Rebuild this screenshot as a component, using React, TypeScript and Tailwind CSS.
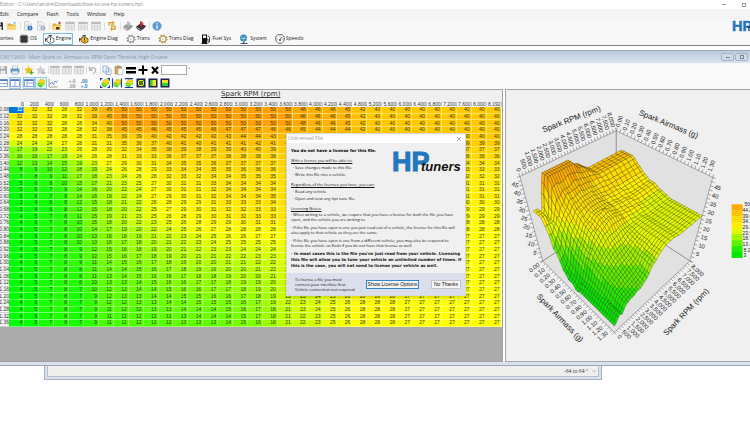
import type { ReactNode } from 'react';

const rpms = [
  0, 200, 400, 600, 800, 1000, 1200, 1400, 1600, 1800, 2000, 2200, 2400, 2600, 2800, 3000, 3200, 3400, 3600,
  3800, 4000, 4200, 4400, 4800, 5200, 5600, 6000, 6400, 6800, 7200, 7600, 8000, 8192,
];

const sparkTable = `
32 32 32 28 32 39 45 50 50 50 50 50 50 50 50 50 50 50 50 48 46 46 45 42 40 40 40 40 40 40 40 40 40
32 32 32 28 32 39 45 50 50 50 50 50 50 50 50 50 50 50 50 48 46 46 45 42 40 40 40 40 40 40 40 40 40
32 32 32 28 28 34 40 50 50 50 50 50 50 50 50 50 50 50 50 48 46 46 45 42 40 40 40 40 40 40 40 40 40
32 32 32 28 28 32 38 45 45 46 45 45 45 46 47 47 47 46 46 45 44 44 44 42 40 40 40 40 40 40 40 40 40
28 28 28 28 28 31 35 39 39 40 42 42 42 42 43 44 44 43 43 43 42 42 42 41 40 40 40 40 40 40 40 40 40
24 24 24 27 28 31 31 35 36 37 40 41 40 41 41 41 42 41 41 41 41 40 40 40 39 39 39 39 39 39 39 39 39
17 19 22 23 26 28 30 32 34 35 38 39 38 39 39 40 40 39 39 39 39 38 38 38 38 37 37 37 37 37 37 37 37
16 16 17 19 24 26 28 31 33 33 36 37 37 37 38 38 38 38 38 38 37 37 37 37 36 36 36 36 36 36 36 36 36
12 13 14 15 19 23 27 29 30 31 34 35 35 36 37 37 37 37 37 37 36 36 36 35 35 35 34 34 34 34 34 34 34
8 9 10 12 18 19 24 26 28 29 33 34 34 35 35 36 36 36 36 36 35 35 35 34 34 34 33 33 33 33 33 33 33
7 8 9 11 17 18 23 24 26 28 32 33 32 34 34 35 35 35 35 35 35 34 34 34 33 33 33 32 32 32 32 32 32
5 6 8 10 15 17 21 23 25 27 30 31 31 33 34 34 34 34 34 34 34 34 33 33 32 32 32 31 31 31 31 31 31
5 6 7 9 14 16 20 22 24 27 30 31 31 32 34 34 34 34 34 34 34 34 33 33 32 32 31 31 31 31 31 31 31
5 6 7 9 14 16 19 22 24 27 29 30 31 32 34 34 34 35 35 34 34 34 33 33 32 32 31 31 31 31 31 31 31
3 4 6 8 12 15 18 21 22 26 28 29 29 31 33 33 33 34 34 34 33 33 32 32 31 31 31 30 30 30 30 30 30
3 4 6 8 12 15 18 20 22 25 27 29 30 31 32 32 33 33 33 33 33 32 32 31 31 30 30 29 29 29 29 29 29
4 5 7 8 11 15 19 21 23 25 26 28 29 30 31 32 33 33 33 33 32 32 31 31 30 30 30 29 29 29 29 29 29
4 5 7 8 10 15 18 20 22 23 25 26 28 29 29 30 31 31 31 31 31 31 30 30 29 29 29 28 28 28 28 28 28
4 5 7 8 10 14 17 19 20 22 24 25 26 27 28 28 28 28 29 29 29 29 29 29 28 28 28 28 28 28 28 28 28
4 5 7 8 10 13 16 18 19 21 22 23 24 25 26 26 27 27 28 28 28 28 28 28 28 28 27 27 27 27 27 27 27
4 5 7 8 10 13 16 17 18 20 21 22 23 24 25 25 25 25 26 27 27 28 28 28 28 28 27 27 27 27 27 27 27
4 5 7 8 9 12 15 16 18 19 20 21 22 23 23 24 24 24 25 26 27 27 28 28 28 28 27 27 27 27 27 27 27
4 5 7 8 9 12 15 16 17 18 19 20 21 21 22 22 23 23 24 25 26 27 27 28 28 28 27 27 27 27 27 27 27
4 5 7 8 9 11 14 15 16 17 18 19 20 20 21 21 22 22 24 25 26 26 27 28 28 28 27 27 27 27 27 27 27
4 5 7 8 8 11 14 14 15 16 17 18 19 19 20 20 21 22 23 24 25 26 27 28 28 28 27 27 27 27 27 27 27
4 5 7 8 8 11 13 14 15 16 16 17 18 18 19 20 20 21 23 24 25 26 27 28 28 28 27 27 27 27 27 27 27
4 5 7 8 8 10 13 13 14 15 16 16 17 17 18 19 19 20 22 24 25 26 27 28 28 28 27 27 27 27 27 27 27
4 5 7 8 7 10 12 13 14 14 15 16 16 17 17 18 19 20 22 23 24 26 27 28 28 28 27 27 27 27 27 27 27
4 5 7 8 7 9 12 13 13 14 14 15 15 16 16 17 18 19 22 23 24 25 26 28 28 28 27 27 27 27 27 27 27
4 5 7 8 7 9 12 12 13 13 14 14 15 15 15 16 17 19 22 23 24 25 26 28 28 28 27 27 27 27 27 27 27
4 5 7 8 7 9 11 12 12 13 13 14 14 14 15 16 17 18 21 23 24 25 26 28 28 28 27 27 27 27 27 27 27
4 5 7 8 7 9 11 11 12 12 13 13 14 14 14 15 17 18 21 22 23 25 26 28 28 28 27 27 27 27 27 27 27
4 5 7 8 7 9 11 11 12 12 12 13 13 13 14 15 16 18 21 22 23 25 26 28 28 28 27 27 27 27 27 27 27`
  .trim()
  .split('\n')
  .map((line) => line.split(' ').map(Number));

const airmass = sparkTable.map((_, i) => 0.08 + i * 0.04);

const heat = (v: number) => {
  if (v <= 27) return `rgb(${Math.round(Math.max(0, (v - 5) / 22) * 255)},255,0)`;
  return `rgb(255,${Math.round(255 - ((v - 27) / 23) * 95)},0)`;
};

/* ---------- small icons ---------- */

const Svg = ({ children }: { children: ReactNode }) => (
  <svg viewBox="0 0 20 20" className="size-[10px] shrink-0" aria-hidden="true">
    {children}
  </svg>
);

const SaveIcon = ({ color = '#333' }) => (
  <Svg>
    <path d="M2 2h14l2 2v14H2z" fill={color} />
    <path d="M5 2h9v6H5zM5 11h10v7H5z" fill="#e8eaee" />
    <path d="M11 3h2v4h-2z" fill={color} />
  </Svg>
);
const FolderIcon = ({ star = false }) => (
  <Svg>
    <path d="M1 5h6l2 2h8v11H1z" fill="#d9a93a" />
    <path d="M3 9h16l-2 9H1z" fill="#f8d775" />
    {star && <path d="M8 12h7v5H8z" fill="#4d3b20" />}
    <path d="M12 4l3-3 3 3-3 3z" fill={star ? '#c63c22' : '#8fc2e8'} />
  </Svg>
);
const DocIcon = ({ color = '#3478bd' }) => (
  <Svg>
    <path d="M3 1h9l4 4v13H3z" fill="#f7f9fc" stroke="#9aa8b8" />
    <path d="M5 6h7M5 9h8M5 12h5" stroke="#a8b6c6" />
    <circle cx="14" cy="14" r="5" fill={color} />
    <path d="M14 13v4M14 10.500v1.500" stroke="#fff" strokeWidth="1.500" />
  </Svg>
);
const GridIcon = () => (
  <Svg>
    <path d="M1 2h18v16H1z" fill="#efefef" stroke="#bfbfbf" />
    <path d="M1 2h18v4H1z" fill="#bdbdbd" />
    <path d="M1 10h18M1 14h18M7 6v12M13 6v12" stroke="#c4c4c4" />
  </Svg>
);
const SwapIcon = () => (
  <Svg>
    <path d="M4 9V3h9l-2-2M13 3l-2 2M16 9v7H8l2 3M8 16l2-3" fill="none" stroke="#d99a16" strokeWidth="2.500" />
    <circle cx="11" cy="9" r="3" fill="#f4ce67" stroke="#9c7c35" />
  </Svg>
);
const ChipIcon = ({ color = '#9b9b9b', arrow = '#b8b8b8' }) => (
  <Svg>
    <path d="M0 11l10-6 10 5-9 8z" fill={color} />
    <path d="M2 12v3l8 4v-3M12 17l7-6" fill="none" stroke={color} strokeWidth="2" />
    <path d="M8 1h5v4h3l-5 6-6-5h3z" fill={arrow} />
  </Svg>
);
const InfoIcon = () => (
  <Svg>
    <circle cx="10" cy="10" r="9" fill="#5f97d3" stroke="#a9c5e6" strokeWidth="1.500" />
    <path d="M10 8.500v7M10 4.500v2" stroke="#fff" strokeWidth="2.500" />
  </Svg>
);
const OsIcon = () => (
  <Svg>
    <path d="M6 1v18M10 1v18M14 1v18M1 6h18M1 10h18M1 14h18" stroke="#444" strokeWidth="1.500" />
    <path d="M3 3h14v14H3z" fill="#363636" />
  </Svg>
);
const EngineIcon = ({ fill = '#fff' }) => (
  <Svg>
    <path d="M6 6h8l2 3h2v7h-2l-2 2H8l-3-3H4V8h2z" fill={fill} stroke="#333" strokeWidth="1.300" />
    <path d="M7 3h7M10.500 3v3M1 8v7M1 11h3" stroke="#333" strokeWidth="1.700" />
    <path d="M11 8v5M11 14.500v1.500" stroke="#222" strokeWidth="1.500" />
  </Svg>
);
const GearIcon = ({ color = '#888' }) => (
  <Svg>
    <circle cx="10" cy="10" r="7.500" fill="none" stroke={color} strokeWidth="3" strokeDasharray="2.900 3" />
    <circle cx="10" cy="10" r="6" fill="#fafafa" stroke={color} strokeWidth="1.800" />
    <circle cx="10" cy="10" r="2" fill="#ccc" />
  </Svg>
);
const FuelIcon = () => (
  <Svg>
    <path d="M2 1h10v18H2zM1 18h12v2H1z" fill="#111" />
    <path d="M4 3h6v5H4z" fill="#fff" />
    <path d="M12 10h2v6q2 2 3 0V7l-3-4" fill="none" stroke="#111" strokeWidth="1.600" />
  </Svg>
);
const SystemIcon = () => (
  <Svg>
    <circle cx="9" cy="8" r="7" fill="#3186b5" />
    <path d="M9 8L4 4M9 8l6-4M9 8v6M3 9h12" stroke="#a9d7ec" strokeWidth="1.500" />
    <path d="M8 15h3v3h6v2H3v-2h5z" fill="#415c70" />
  </Svg>
);
const SpeedoIcon = () => (
  <Svg>
    <path d="M5 17A9 9 0 1 1 15 17" fill="none" stroke="#444" strokeWidth="1.600" />
    <path d="M10 11l4-5M6 18.500h8M3 10h2M15 10h2M10 3v2" stroke="#444" strokeWidth="1.600" />
    <circle cx="10" cy="12" r="1.800" fill="#444" />
  </Svg>
);
const PrintIcon = () => (
  <Svg>
    <path d="M5 2h10v6H5z" fill="#fff" stroke="#7a8fa3" />
    <path d="M1 7h18v8H1z" fill="#6c9cc0" />
    <path d="M4 12h12v6H4z" fill="#e9f3fa" stroke="#5483a8" />
  </Svg>
);
const StarIcon = ({ color = '#f0c020', badge = '#4ba83c' }) => (
  <Svg>
    <path d="M9 1l3 6 7 .7-5 4.500 1.500 6.800L9 15.500 3 19l1.500-7L0 7.500 6.500 7z" fill={color} />
    <path d="M15 11v8M11 15h8" stroke={badge} strokeWidth="2.500" />
  </Svg>
);
const UndoIcon = () => (
  <Svg>
    <path d="M3 3v7h7M4 9q5-6 10-2 4 5-4 11" fill="none" stroke="#b2b2b2" strokeWidth="2.500" />
  </Svg>
);
const CopyIcon = () => (
  <Svg>
    <path d="M2 2h8l3 3v9H2zM8 6h7l3 3v10H8z" fill="#f4f8fd" stroke="#7d9cc4" strokeWidth="1.500" />
    <path d="M10 11h6M10 14h6" stroke="#9eb8d8" />
  </Svg>
);
const PasteIcon = () => (
  <Svg>
    <path d="M2 3h13v15H2z" fill="#d8a659" stroke="#a8722c" />
    <path d="M6 1h5v4H6z" fill="#8d8d8d" />
    <path d="M8 7h8l2 2v10H8z" fill="#f8fafd" stroke="#8da0bb" />
  </Svg>
);
const EqualsIcon = () => (
  <Svg>
    <path d="M0 4h20v5H0zM0 12h20v5H0z" fill="#000" />
  </Svg>
);
const PlusIcon = () => (
  <Svg>
    <path d="M8 1h4v7h7v4h-7v7H8v-7H1V8h7z" fill="#000" />
  </Svg>
);
const TimesIcon = () => (
  <Svg>
    <path d="M4 4l12 13M16 4L4 17" stroke="#000" strokeWidth="4" />
  </Svg>
);
const PaneIcon = ({ d = 'M10 3v14' }) => (
  <Svg>
    <path d="M1 3h18v14H1z" fill="#fff" stroke="#6b8fce" strokeWidth="1.500" />
    <path d="M1 3h18v3H1z" fill="#4f7ac4" />
    <path d={d} stroke="#6b8fce" strokeWidth="1.500" />
  </Svg>
);
const SurfaceIcon = ({ marks = '' }) => (
  <Svg>
    <path d="M3 11l6-9 8 2 1 7-8 8-6-3z" fill="#2fd32a" />
    <path d="M4 9l5-7 8 2 1 4-6 4z" fill="#f9d21b" />
    <path d="M4 11l7 2 7-5-1 5-7 2-6-2z" fill="#c0ea22" />
    <path d={marks} fill="none" stroke="#2136a8" strokeWidth="2.500" />
  </Svg>
);
const LineIcon = () => (
  <Svg>
    <path d="M2 1v17h17" fill="none" stroke="#888" strokeWidth="1.500" />
    <path d="M3 14l4-6 4 5 3-7 3 3 2-4" fill="none" stroke="#4c79b8" strokeWidth="1.500" />
  </Svg>
);
const DecimalIcon = ({ color = '#9a9a9a', more = false }) => (
  <svg viewBox="0 0 20 20" className="size-[10px]" fontFamily="Liberation Sans, sans-serif" fontSize="10" fontWeight="700" fill={color} aria-hidden="true">
    <text x="1" y="9">{more ? '.00' : '+.0'}</text>
    <text x="1" y="19">{more ? '+.0' : '.00'}</text>
  </svg>
);
const BoxIcon = ({ d = '', bands = '' }) => (
  <Svg>
    <path d="M3 3h14v14H3z" fill="#e9e32b" />
    <path d={bands} fill="#38cc31" />
    <path d="M2.500 2.500h15v15h-15z" fill="none" stroke="#1c2350" strokeWidth="3" />
    <path d={d} fill="none" stroke="#1f5a2a" strokeWidth="1.600" />
  </Svg>
);

/* ---------- toolbar parts ---------- */

const Tool = ({ label, active = false, wide = false, children }: { label: string; active?: boolean; wide?: boolean; children: ReactNode }) => (
  <button
    type="button"
    aria-label={label}
    className={`flex h-3 shrink-0 items-center justify-center ${wide ? 'w-[13px]' : 'w-3'} ${active ? 'border border-[#9cc9e6] bg-[#e3f0fa]' : ''}`}
  >
    {children}
  </button>
);

const Sep = ({ wide = false }) => <span className={`h-2 shrink-0 border-r border-[#dedede] ${wide ? 'w-[3px]' : 'w-[2px]'}`} />;

const menuItems = ['Edit', 'Compare', 'Flash', 'Tools', 'Window', 'Help'];

const navItems = [
  { label: 'OS', icon: <OsIcon /> },
  { label: 'Engine', icon: <EngineIcon />, active: true },
  { label: 'Engine Diag', icon: <EngineIcon fill="#f2b61f" /> },
  { label: 'Trans', icon: <GearIcon /> },
  { label: 'Trans Diag', icon: <GearIcon color="#b08a34" /> },
  { label: 'Fuel Sys', icon: <FuelIcon /> },
  { label: 'System', icon: <SystemIcon /> },
  { label: 'Speedo', icon: <SpeedoIcon /> },
];

const Logo = ({ className = '' }) => (
  <svg viewBox="0 0 72 24" className={className} role="img" aria-label="HP tuners">
    <text x="0" y="21" fontFamily="Liberation Sans, sans-serif" fontSize="27" fontWeight="700" fill="#2477bd" stroke="#2477bd" strokeWidth="1">HP</text>
    <text x="29" y="21" fontFamily="Liberation Sans, sans-serif" fontSize="13" fontWeight="700" fontStyle="italic" fill="#111">tuners</text>
  </svg>
);

const AppHeader = () => (
  <header className="border-b border-[#858589] bg-[#f8f8f8]">
    <div className="flex h-[9px] items-center justify-between bg-white text-[#8c8c8c]">
      <span className="text-[5px]">Editor - C:\Users\andre\Downloads\how-to-use-hp-tuners.hpt</span>
      <div className="flex items-center gap-4 pr-1">
        <button type="button" aria-label="Minimize" className="flex h-1 w-1 items-center"><span className="h-px w-1 bg-[#999]" /></button>
        <button type="button" aria-label="Restore" className="size-1 border border-[#999]" />
      </div>
    </div>
    <nav className="flex h-[10px] items-center gap-2 bg-[#f4f4f4]">
      {menuItems.map((item) => (
        <button key={item} type="button" className="text-[5px] text-[#222]">{item}</button>
      ))}
    </nav>
    <div className="flex">
      <div className="min-w-0 grow">
        <div className="-ml-2 flex h-[13px] items-center">
          <Tool wide label="Save"><SaveIcon /></Tool>
          <Tool wide label="Open"><FolderIcon /></Tool>
          <Sep wide />
          <Tool wide label="File info"><DocIcon /></Tool>
          <Tool wide label="File history"><DocIcon color="#9db2c7" /></Tool>
          <Sep wide />
          <Tool wide label="Open compare file"><FolderIcon star /></Tool>
          <Tool wide label="Compare table"><GridIcon /></Tool>
          <Tool wide label="Compare list"><GridIcon /></Tool>
          <Tool wide label="Compare log"><GridIcon /></Tool>
          <Sep wide />
          <Tool wide label="Swap files"><SwapIcon /></Tool>
          <Sep wide />
          <Tool wide label="Read vehicle"><ChipIcon /></Tool>
          <Tool wide label="Write vehicle"><ChipIcon color="#3d3438" arrow="#c22535" /></Tool>
          <Sep wide />
          <Tool wide label="About"><InfoIcon /></Tool>
        </div>
        <div className="flex h-[13px] items-center gap-1 text-[5px] text-[#222]">
          <button type="button" className="w-[13px] whitespace-nowrap text-left">orites</button>
          {navItems.map((item) => (
            <button
              key={item.label}
              type="button"
              className={`flex h-3 shrink-0 items-center gap-px border px-px ${item.active ? 'border-[#7db9d9] bg-[#f7fcff]' : 'border-transparent'}`}
            >
              {item.icon}
              {item.label}
            </button>
          ))}
        </div>
      </div>
      <div className="flex w-[18px] shrink-0 overflow-hidden pt-px">
        <Logo className="h-[13px] w-[39px] shrink-0" />
      </div>
    </div>
  </header>
);

const EditorToolbars = () => (
  <div className="bg-[#f9f9f9]">
    <div className="-ml-[3px] flex h-[13px] items-center">
      <Tool label="Save table"><SaveIcon color="#a3a3ab" /></Tool>
      <Tool label="Print"><PrintIcon /></Tool>
      <Sep />
      <Tool label="Add favorite"><StarIcon /></Tool>
      <Tool label="Remove favorite"><StarIcon color="#cfcfcf" badge="#b5b5b5" /></Tool>
      <Sep />
      <Tool label="Compare"><GridIcon /></Tool>
      <Tool label="Difference"><GridIcon /></Tool>
      <Tool label="Percent"><GridIcon /></Tool>
      <Sep />
      <Tool label="Undo"><UndoIcon /></Tool>
      <Sep />
      <Tool label="Copy"><CopyIcon /></Tool>
      <Tool label="Paste"><PasteIcon /></Tool>
      <Tool label="Set"><EqualsIcon /></Tool>
      <Tool label="Add"><PlusIcon /></Tool>
      <Tool label="Multiply"><TimesIcon /></Tool>
      <input aria-label="Value" className="h-[10px] w-[26px] border border-[#a8a8a8] bg-white text-[5px]" />
      <span className="pl-px text-[5px] text-[#555]">°</span>
    </div>
    <div className="-ml-[3px] flex h-[13px] items-center">
      <Tool label="Rows view"><PaneIcon d="M1 11h18" /></Tool>
      <Tool label="Columns view" active><PaneIcon /></Tool>
      <Sep />
      <Tool label="Table view" active><PaneIcon d="M6 3v14M6 10h13" /></Tool>
      <Tool label="Surface view" active><SurfaceIcon /></Tool>
      <Tool label="Line view"><LineIcon /></Tool>
      <div className="flex px-2">
        <Tool label="Fewer decimals"><DecimalIcon /></Tool>
        <Tool label="More decimals"><DecimalIcon color="#3f7fb5" more /></Tool>
      </div>
      <Tool label="Interpolate both"><SurfaceIcon marks="M1 5V1h4M15 1h4v4M19 15v4h-4M5 19H1v-4" /></Tool>
      <Tool label="Interpolate columns"><SurfaceIcon marks="M1 1v18M19 1v18" /></Tool>
      <Tool label="Interpolate rows"><SurfaceIcon marks="M2 1h16M2 19h16" /></Tool>
      <Tool label="Smooth both"><BoxIcon d="M4 4l12 12M16 4L4 16M7 7h6v6H7z" /></Tool>
      <Tool label="Smooth columns"><BoxIcon bands="M3 3h6v14H3z" /></Tool>
      <Tool label="Smooth rows"><BoxIcon bands="M3 10h14v7H3z" /></Tool>
    </div>
  </div>
);

/* ---------- table ---------- */

const SparkGrid = () => (
  <table className="h-[225px] w-full table-fixed border-collapse bg-white text-right text-[5px] leading-[5px] text-[#3c3a10]">
    <thead>
      <tr className="bg-[#f6f6f6] text-[#333]">
        <th aria-label="Airmass" className="w-[9px] p-0" />
        {rpms.map((rpm) => (
          <th key={rpm} scope="col" className="whitespace-nowrap border-r border-[#c9c9c9] p-0 font-normal">
            {rpm.toLocaleString('en-US')}
          </th>
        ))}
      </tr>
    </thead>
    <tbody>
      {sparkTable.map((row, r) => (
        <tr key={airmass[r]}>
          <th scope="row" className="border-b border-[#cfcfcf] bg-[#f3f3f3] p-0 font-normal text-[#333]">
            <span className="float-right">{airmass[r].toFixed(2)}</span>
          </th>
          {row.map((value, c) => (
            <td
              key={rpms[c]}
              className={`border-b border-r border-white/40 p-0 pr-px ${r === 0 && c === 0 ? 'text-white' : ''}`}
              style={{ backgroundColor: r === 0 && c === 0 ? '#0078d7' : heat(value) }}
            >
              {value}
            </td>
          ))}
        </tr>
      ))}
    </tbody>
  </table>
);

/* ---------- surface chart ---------- */

type Point = [number, number];

const mix = (a: Point, b: Point, t: number): Point => [a[0] + (b[0] - a[0]) * t, a[1] + (b[1] - a[1]) * t];

const top = { left: [14, 87], back: [111, 41], right: [208, 88], front: [110, 162] } as Record<string, Point>;
const floor = { left: [37, 172], back: [111, 124], right: [185, 172], front: [109, 244] } as Record<string, Point>;

// u runs along rpm, v along airmass, w along the spark value
const project = (u: number, v: number, w: number): Point => {
  const upper = mix(mix(top.left, top.back, u), mix(top.front, top.right, u), v);
  const lower = mix(mix(floor.left, floor.back, u), mix(floor.front, floor.right, u), v);
  return mix(lower, upper, w);
};

const bandColors = ['#00e800', '#1fee00', '#5cf200', '#a0f500', '#e2fa00', '#ffee00', '#ffdc00', '#ffc400', '#ffaa00'];
const bandOf = (v: number) => bandColors[Math.min(8, Math.max(0, Math.floor((v - 3) / 5.22)))];
const pts = (list: Point[]) => list.map(([x, y]) => `${x.toFixed(1)},${y.toFixed(1)}`).join(' ');

const SurfaceMesh = () => {
  const cells: ReactNode[] = [];
  for (let r = 0; r < airmass.length - 1; r++) {
    for (let c = rpms.length - 2; c >= 0; c--) {
      const at = (i: number, j: number) => project(rpms[j] / 8192, airmass[i] / 1.36, sparkTable[i][j] / 50);
      const mean = (sparkTable[r][c] + sparkTable[r + 1][c] + sparkTable[r][c + 1] + sparkTable[r + 1][c + 1]) / 4;
      cells.push(
        <polygon
          key={`${r}-${c}`}
          points={pts([at(r, c), at(r, c + 1), at(r + 1, c + 1), at(r + 1, c)])}
          fill={bandOf(mean)}
        />,
      );
    }
  }
  return <g stroke="#2a2a00" strokeWidth="0.3">{cells}</g>;
};

const Label = ({ at, angle, end = false, children }: { at: Point; angle: number; end?: boolean; children: ReactNode }) => (
  <text transform={`translate(${at[0].toFixed(1)} ${at[1].toFixed(1)}) rotate(${angle})`} textAnchor={end ? 'end' : 'start'} dy="2">
    {children}
  </text>
);

const Ticks = ({ from, to, count, dx, dy }: { from: Point; to: Point; count: number; dx: number; dy: number }) => (
  <path
    d={Array.from({ length: count + 1 }, (_, i) => {
      const [x, y] = mix(from, to, i / count);
      return `M${x.toFixed(1)} ${y.toFixed(1)}l${dx} ${dy}`;
    }).join('')}
  />
);

const shift = ([x, y]: Point, dx: number, dy: number): Point => [x + dx, y + dy];

const rpmLabels = Array.from({ length: 17 }, (_, i) => i * 500);
const airLabels = Array.from({ length: 14 }, (_, i) => i / 10);
const sparkLabels = [5, 10, 15, 20, 25, 30, 35, 40, 45];
const legend = ['50', '44.8', '39.6', '34.3', '29.1', '23.9', '18.7', '13.4', '8.2', '3'];

const SurfaceChart = () => (
  <svg viewBox="0 0 246 271" className="w-full" fontFamily="Liberation Sans, sans-serif" fontSize="6" fill="#222" role="img" aria-label="Spark surface">
    <g fill="#e1e1e1" stroke="#666" strokeWidth="0.5">
      <polygon points={pts([top.left, top.back, floor.back, floor.left])} />
      <polygon points={pts([top.back, top.right, floor.right, floor.back])} />
      <polygon points={pts([floor.left, floor.back, floor.right, floor.front])} />
    </g>
    <g stroke="#555" strokeWidth="0.5">
      <Ticks from={top.left} to={top.back} count={32} dx={-1} dy={-3} />
      <Ticks from={top.back} to={top.right} count={27} dx={1} dy={-3} />
      <Ticks from={floor.left} to={floor.front} count={27} dx={-2} dy={2} />
      <Ticks from={floor.front} to={floor.right} count={32} dx={2} dy={2} />
      <Ticks from={top.left} to={floor.left} count={20} dx={-3} dy={1} />
      <Ticks from={top.right} to={floor.right} count={20} dx={3} dy={1} />
    </g>
    <SurfaceMesh />
    {rpmLabels.map((v) => (
      <Label key={v} at={shift(mix(top.left, top.back, v / 8192), -1, -5)} angle={75} end>{v.toLocaleString('en-US')}</Label>
    ))}
    {airLabels.map((v) => (
      <Label key={v} at={shift(mix(top.back, top.right, v / 1.36), 1, -4)} angle={-70}>{v.toFixed(2)}</Label>
    ))}
    {airLabels.map((v) => (
      <Label key={v} at={shift(mix(floor.left, floor.front, v / 1.36), -4, 3)} angle={-38} end>{v.toFixed(2)}</Label>
    ))}
    {rpmLabels.map((v) => (
      <Label key={v} at={shift(mix(floor.front, floor.right, v / 8192), 4, 3)} angle={42}>{v.toLocaleString('en-US')}</Label>
    ))}
    {sparkLabels.map((v) => (
      <g key={v}>
        <Label at={shift(mix(floor.left, top.left, v / 50), -4, 1)} angle={20} end>{v}</Label>
        <Label at={shift(mix(floor.right, top.right, v / 50), 4, 1)} angle={15}>{v}</Label>
      </g>
    ))}
    <g fontSize="8">
      <Label at={[37, 41]} angle={-21}>Spark RPM (rpm)</Label>
      <Label at={[134, 23]} angle={22}>Spark Airmass (g)</Label>
      <Label at={[32, 207]} angle={46}>Spark Airmass (g)</Label>
      <Label at={[160, 246]} angle={-46}>Spark RPM (rpm)</Label>
    </g>
    {bandColors.map((color, i) => (
      <rect key={color} x="227" y={115 + (8 - i) * 6} width="11" height="6" fill={color} />
    ))}
    <g fontSize="5">
      {legend.map((v, i) => (
        <text key={v} x={i === 0 ? 240 : i >= 8 ? 239 : 238} y={117 + i * 5.7}>{v}</text>
      ))}
    </g>
  </svg>
);

/* ---------- dialog ---------- */

const LicenseDialog = () => (
  <div role="dialog" aria-label="Unlicensed File" className="absolute left-[286px] top-[43px] w-[180px] whitespace-nowrap border border-[#d9d9d9] bg-[#f0f0f0] font-[Open_Sans,sans-serif] text-[4px] leading-[5px] text-[#111] shadow-md">
    <div className="flex h-[9px] items-center justify-between bg-white px-px pr-1 text-[5px] text-[#999]">
      Unlicensed File
      <button type="button" aria-label="Close">
        <svg viewBox="0 0 8 8" className="size-1"><path d="M0 0l8 8M8 0L0 8" stroke="#888" strokeWidth="1.500" /></svg>
      </button>
    </div>
    <div className="flex h-[130px] flex-col px-1 pt-1">
      <div className="flex justify-between">
        <div>
          <p className="mb-1 pt-px font-[DejaVu_Sans,sans-serif] font-bold text-black">You do not have a license for this file.</p>
          <p className="leading-[7px] underline">With a license you will be able to:</p>
          <p className="pl-[2px] leading-[7px]">· Save changes made to this file.</p>
          <p className="mb-[3px] pl-[2px] leading-[7px]">· Write this file into a vehicle.</p>
        </div>
        <Logo className="-mr-[3px] mt-[3px] h-6 w-[72px]" />
      </div>
      <p className="leading-[7px] underline">Regardless of the licenses you have, you can:</p>
      <p className="pl-[2px] leading-[7px]">· Read any vehicle.</p>
      <p className="mb-[3px] pl-[2px] leading-[7px]">· Open and view any hpt tune file.</p>
      <p className="leading-[7px] underline">Licensing Notes:</p>
      <p className="mb-[3px]">
        · When writing to a vehicle, we require that you have a license for both the file you have<br />open, and the vehicle you are writing to.
      </p>
      <p className="mb-[3px]">
        · If the file you have open is one you just read out of a vehicle, the license for this file will<br />also apply to that vehicle as they are the same.
      </p>
      <p className="mb-[3px]">
        · If the file you have open is one from a different vehicle, you may also be required to<br />license the vehicle on flash if you do not have that license as well.
      </p>
      <p className="font-[DejaVu_Sans,sans-serif] font-bold leading-[6px]">
        · In most cases this is the file you've just read from your vehicle. Licensing<br />this file will allow you to tune your vehicle an unlimited number of times. If<br />this is the case, you will not need to license your vehicle as well.
      </p>
    </div>
    <div className="flex h-[22px] items-center bg-[#dbdfec] pl-2 pr-1">
      <p className="w-[71px] leading-[5px]">To license a file you must<br />connect your interface first.<br />Vehicle connection not required.</p>
      <button type="button" className="h-[9px] w-[53px] border border-[#3187cc] bg-[#f5f5f5] font-[Liberation_Sans,sans-serif] text-[5px] leading-[7px]">Show License Options</button>
      <button type="button" className="ml-auto h-[9px] w-[30px] border border-[#c4c4c8] bg-[#f5f5f5] font-[Liberation_Sans,sans-serif] text-[5px] leading-[7px]">No Thanks</button>
    </div>
  </div>
);

const winButton = 'flex h-2 w-[13px] items-center justify-center rounded-[2px] border border-[#a5b3c4] bg-[#cfdae7]';

export default function App() {
  return (
    <div className="min-h-screen overflow-hidden bg-white font-[Open_Sans,sans-serif] leading-none">
      <AppHeader />
      <main className="pt-1">
        <section className="border-y border-[#9aa8b8]">
          <div className="flex h-3 items-center justify-between bg-linear-to-b from-[#bccbdc] to-[#d7e3f0] text-[5px] text-[#8795a5]">
            <span>CM] 12600 - Main Spark vs. Airmass vs. RPM Open Throttle, High Octane</span>
            <div className="flex gap-px pr-[2px]">
              <button type="button" aria-label="Minimize table" className={winButton}><span className="h-px w-1 bg-[#75879b]" /></button>
              <button type="button" aria-label="Restore table" className={winButton}><span className="size-1 border border-[#75879b]" /></button>
            </div>
          </div>
          <EditorToolbars />
          <div className="flex border-b-[3px] border-[#dbe1ea]">
            <div className="relative flex w-[67%] shrink-0 flex-col border-r border-y border-[#a0a0a0] bg-[#ababab] font-[Liberation_Sans,Arial,sans-serif]">
              <h1 className="h-3 bg-[#f0f0f0] text-center font-[DejaVu_Sans,sans-serif] text-[7px] leading-[9px] text-[#333] underline">Spark RPM (rpm)</h1>
              <SparkGrid />
              <LicenseDialog />
            </div>
            <div className="ml-[2px] min-w-0 grow border-l border-y border-[#a0a8b4] bg-[#f0f0f0] pb-[2px]">
              <SurfaceChart />
            </div>
          </div>
        </section>
        <section className="ml-11 mr-[148px] border border-t-0 border-[#a3b0c0] bg-[#dbe1ea] px-[2px] pb-[2px]">
          <div className="flex h-[11px] items-center justify-end gap-1 border border-t-0 border-[#b3bfcc] bg-[#efefee] pr-[2px] text-[5px] text-[#333]">
            -64 to 64 °
            <svg viewBox="0 0 8 8" className="size-1" aria-hidden="true"><path d="M1 2l3 4 3-4" fill="none" stroke="#999" /></svg>
          </div>
        </section>
      </main>
    </div>
  );
}
